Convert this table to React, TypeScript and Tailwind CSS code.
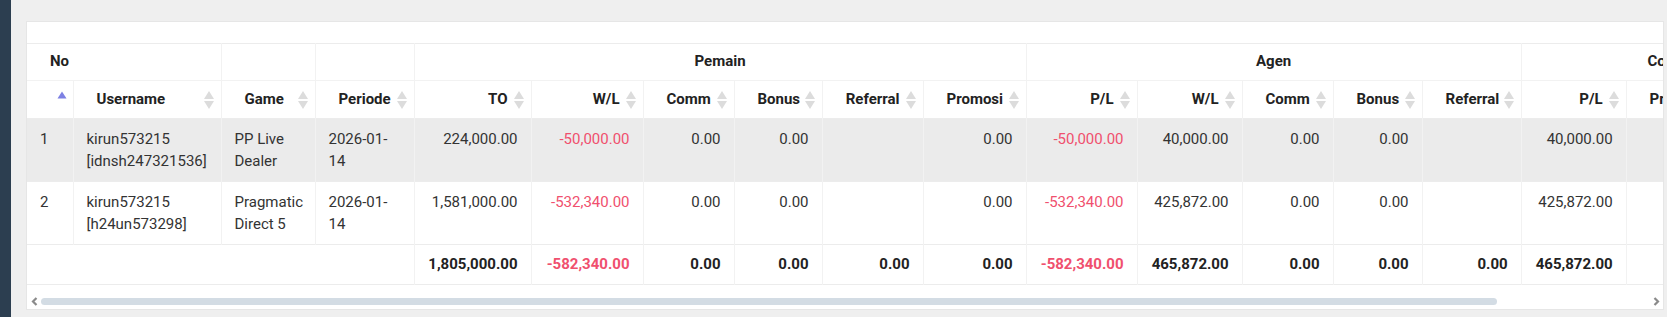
import React from "react";

type Align = "left" | "right";

interface Col {
  label: string;
  width: number;
  align: Align;
}

const columns: Col[] = [
  { label: "", width: 46, align: "left" },
  { label: "Username", width: 148, align: "left" },
  { label: "Game", width: 94, align: "left" },
  { label: "Periode", width: 99, align: "left" },
  { label: "TO", width: 117, align: "right" },
  { label: "W/L", width: 112, align: "right" },
  { label: "Comm", width: 91, align: "right" },
  { label: "Bonus", width: 88, align: "right" },
  { label: "Referral", width: 101, align: "right" },
  { label: "Promosi", width: 103, align: "right" },
  { label: "P/L", width: 111, align: "right" },
  { label: "W/L", width: 105, align: "right" },
  { label: "Comm", width: 91, align: "right" },
  { label: "Bonus", width: 89, align: "right" },
  { label: "Referral", width: 99, align: "right" },
  { label: "P/L", width: 105, align: "right" },
  { label: "Promosi", width: 103, align: "right" },
  { label: "W/L", width: 108, align: "right" },
];

interface Row {
  no: string;
  user: [string, string];
  game: [string, string];
  periode: [string, string];
  values: string[];
}

const rows: Row[] = [
  {
    no: "1",
    user: ["kirun573215", "[idnsh247321536]"],
    game: ["PP Live", "Dealer"],
    periode: ["2026-01-", "14"],
    values: ["224,000.00", "-50,000.00", "0.00", "0.00", "", "0.00", "-50,000.00", "40,000.00", "0.00", "0.00", "", "40,000.00", "", ""],
  },
  {
    no: "2",
    user: ["kirun573215", "[h24un573298]"],
    game: ["Pragmatic", "Direct 5"],
    periode: ["2026-01-", "14"],
    values: ["1,581,000.00", "-532,340.00", "0.00", "0.00", "", "0.00", "-532,340.00", "425,872.00", "0.00", "0.00", "", "425,872.00", "", ""],
  },
];

const totals = ["1,805,000.00", "-582,340.00", "0.00", "0.00", "0.00", "0.00", "-582,340.00", "465,872.00", "0.00", "0.00", "0.00", "465,872.00", "", ""];

const tableWidth = columns.reduce((s, c) => s + c.width, 0);

function SortIcon() {
  return (
    <svg width="10" height="19" viewBox="0 0 10 19" className="absolute right-[7px] top-1/2 -translate-y-1/2">
      <polygon points="0,8.5 5,0.5 10,8.5" fill="#dcdcdc" />
      <polygon points="0,10.5 5,18.5 10,10.5" fill="#dcdcdc" />
    </svg>
  );
}

function SortActive() {
  return (
    <svg width="10" height="19" viewBox="0 0 10 19" className="absolute right-[6px] top-1/2 -translate-y-1/2">
      <polygon points="0.5,8 5,1 9.5,8" fill="#7d80e3" />
    </svg>
  );
}

function Chevron({ dir }: { dir: "left" | "right" }) {
  return (
    <svg width="7" height="9" viewBox="0 0 7 9">
      <polyline
        points={dir === "left" ? "5.5,1 2,4.5 5.5,8" : "1.5,1 5,4.5 1.5,8"}
        fill="none"
        stroke="#8a8a8a"
        strokeWidth="2.2"
      />
    </svg>
  );
}

const numClass = (v: string) => (v.startsWith("-") ? "text-[#f0506e]" : "");

export default function App() {
  return (
    <div className="flex h-[317px] w-full bg-[#efefef] font-['Roboto','Liberation_Sans',sans-serif] text-[15px] leading-[21.5px] text-[#333]">
      <div className="w-[11px] shrink-0 bg-[#2c3e50]" />

      <div className="min-w-0 flex-1 pl-[15px] pr-[3px] pt-[21px]">
        {/* kartu tabel */}
        <div className="h-[289px] overflow-hidden border border-[#e6e6e6] bg-white pt-[21px]">
          <div className="overflow-hidden">
            <table className="table-fixed border-collapse" style={{ width: tableWidth }}>
              <colgroup>
                {columns.map((c, i) => (
                  <col key={i} style={{ width: c.width }} />
                ))}
              </colgroup>
              <thead>
                <tr className="h-[37px] border-t border-[#ececec]">
                  <th colSpan={2} className="px-[23px] text-left font-bold text-[#222]">
                    No
                  </th>
                  <th className="border-l border-[#f2f2f2]" />
                  <th className="border-l border-[#f2f2f2]" />
                  <th colSpan={6} className="border-l border-[#f2f2f2] text-center font-bold text-[#222]">
                    Pemain
                  </th>
                  <th colSpan={5} className="border-l border-[#f2f2f2] text-center font-bold text-[#222]">
                    Agen
                  </th>
                  <th colSpan={3} className="border-l border-[#f2f2f2] text-center font-bold text-[#222]">
                    Company
                  </th>
                </tr>
                <tr className="h-[38px] border-t border-[#f2f2f2]">
                  {columns.map((c, i) => (
                    <th
                      key={i}
                      className={`relative whitespace-nowrap px-[23px] font-bold text-[#222] ${
                        c.align === "right" ? "text-right" : "text-left"
                      } ${i > 0 ? "border-l border-[#f2f2f2]" : ""}`}
                    >
                      {c.label}
                      {i === 0 ? <SortActive /> : <SortIcon />}
                    </th>
                  ))}
                </tr>
              </thead>
              <tbody>
                {rows.map((r, idx) => (
                  <tr key={r.no} className={`h-[63px] border-t border-[#ececec] ${idx === 0 ? "bg-[#ebebeb]" : "bg-white"}`}>
                    <td className="px-[13px] pt-[10px] align-top">{r.no}</td>
                    <td className="border-l border-[#f2f2f2] px-[13px] pt-[10px] align-top whitespace-nowrap">
                      {r.user[0]}
                      <br />
                      {r.user[1]}
                    </td>
                    <td className="border-l border-[#f2f2f2] px-[13px] pt-[10px] align-top whitespace-nowrap">
                      {r.game[0]}
                      <br />
                      {r.game[1]}
                    </td>
                    <td className="border-l border-[#f2f2f2] px-[13px] pt-[10px] align-top whitespace-nowrap">
                      {r.periode[0]}
                      <br />
                      {r.periode[1]}
                    </td>
                    {r.values.map((v, i) => (
                      <td
                        key={i}
                        className={`border-l border-[#f2f2f2] px-[13px] pt-[10px] text-right align-top whitespace-nowrap ${numClass(v)}`}
                      >
                        {v}
                      </td>
                    ))}
                  </tr>
                ))}
              </tbody>
              <tfoot>
                <tr className="h-[40px] border-y border-[#ececec]">
                  <td colSpan={4} />
                  {totals.map((v, i) => (
                    <td
                      key={i}
                      className={`border-l border-[#f2f2f2] px-[13px] text-right font-bold whitespace-nowrap ${
                        v.startsWith("-") ? "text-[#f0506e]" : "text-[#222]"
                      }`}
                    >
                      {v}
                    </td>
                  ))}
                </tr>
              </tfoot>
            </table>
          </div>

          {/* scrollbar horizontal */}
          <div className="flex h-[24px] items-end pb-[3px]">
            <div className="flex w-[14px] justify-center pb-[0px]">
              <Chevron dir="left" />
            </div>
            <div className="flex-1 pb-[1px]">
              <div className="h-[7px] w-[1456px] rounded-full bg-[#d3dce4]" />
            </div>
            <div className="flex w-[14px] justify-center">
              <Chevron dir="right" />
            </div>
          </div>
        </div>
      </div>
    </div>
  );
}
